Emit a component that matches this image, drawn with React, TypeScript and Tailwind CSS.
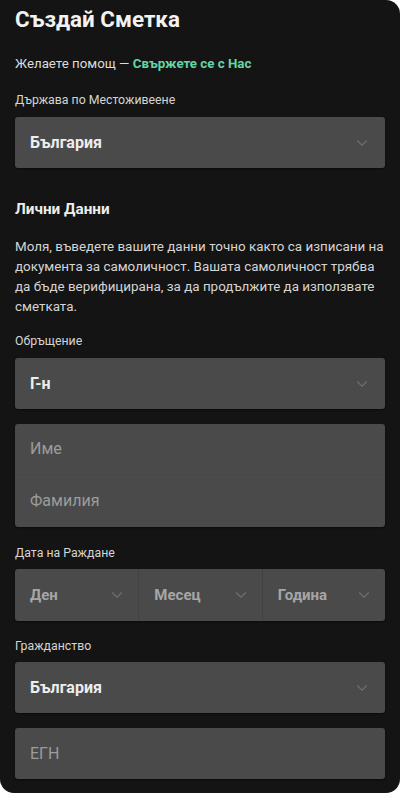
import { ChevronDown } from 'lucide-react';

function Chevron() {
  return <ChevronDown size={18} strokeWidth={1.5} className="shrink-0 text-white/20" />;
}

function SelectField({ value }: { value: string }) {
  return (
    <div className="flex h-[51px] items-center justify-between rounded-[3px] bg-[#4a4a4a] pl-[15px] pr-[14px] shadow-[0_1px_2px_rgba(0,0,0,0.5)]">
      <span className="text-[16px] font-bold text-[#ededed]">{value}</span>
      <Chevron />
    </div>
  );
}

function Label({ children, className = '' }: { children: string; className?: string }) {
  return <div className={`text-[12.3px] leading-[18px] text-[#d4d4d4] ${className}`}>{children}</div>;
}

export default function App() {
  const dateParts = ['Ден', 'Месец', 'Година'];
  return (
    <div className="min-h-[793px] bg-white" style={{ fontFamily: 'Roboto, "Noto Sans", sans-serif' }}>
      <div className="flex h-[793px] flex-col rounded-tr-[14px] rounded-b-[14px] bg-[#141414] px-[15px] pt-[5px]">
        <h1 className="text-[22.4px] font-bold leading-[28px] text-[#f2f2f2]">Създай Сметка</h1>

        <div className="mt-[22px] text-[13.3px] leading-[18px] text-[#dcdcdc]">
          Желаете помощ — <span className="font-bold text-[#66d4a6]">Свържете се с Нас</span>
        </div>

        <Label className="mt-[18px] mb-[8px]">Държава по Местоживеене</Label>
        <SelectField value="България" />

        <h2 className="mt-[31px] text-[15.3px] font-bold leading-[20px] text-[#ededed]">Лични Данни</h2>
        <p className="mt-[18px] text-[13.4px] leading-[20px] text-[#d4d4d4]">
          Моля, въведете вашите данни точно както са изписани на документа за самоличност. Вашата самоличност трябва да бъде верифицирана, за да продължите да използвате сметката.
        </p>

        <Label className="mt-[15px] mb-[8px]">Обръщение</Label>
        <SelectField value="Г-н" />

        <div className="mt-[15px] flex h-[103px] flex-col rounded-[3px] bg-[#4a4a4a] shadow-[0_1px_2px_rgba(0,0,0,0.5)]">
          <div className="flex h-[51px] items-center border-b border-[#474747] pl-[15px] text-[16px] text-[#9c9c9c]">Име</div>
          <div className="flex flex-1 items-center pl-[15px] text-[16px] text-[#9c9c9c]">Фамилия</div>
        </div>

        <Label className="mt-[17px] mb-[7px]">Дата на Раждане</Label>
        <div className="grid h-[52px] grid-cols-3 rounded-[3px] bg-[#4a4a4a] shadow-[0_1px_2px_rgba(0,0,0,0.5)]">
          {dateParts.map((p, i) => (
            <div
              key={p}
              className={`flex items-center justify-between pl-[15px] pr-[12px] ${i > 0 ? 'border-l border-[#424242]' : ''}`}
            >
              <span className="text-[15px] font-bold text-[#a6a6a6]">{p}</span>
              <Chevron />
            </div>
          ))}
        </div>

        <Label className="mt-[16px] mb-[7px]">Гражданство</Label>
        <SelectField value="България" />

        <div className="mt-[15px] flex h-[51px] items-center rounded-[3px] bg-[#4a4a4a] pl-[15px] text-[16px] text-[#9c9c9c] shadow-[0_1px_2px_rgba(0,0,0,0.5)]">
          ЕГН
        </div>
      </div>
    </div>
  );
}
